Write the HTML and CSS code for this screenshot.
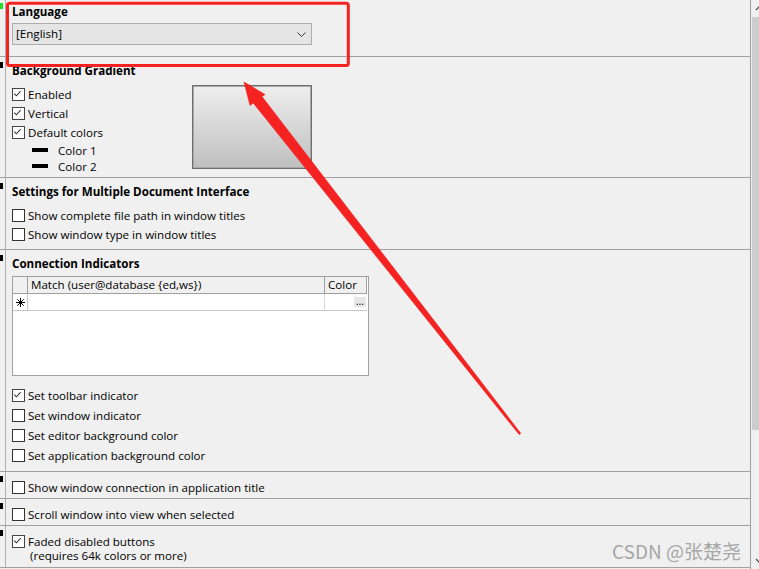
FILE: index.html
```html
<!DOCTYPE html>
<html lang="en">
<head>
<meta charset="utf-8">
<title>Preferences</title>
<link rel="stylesheet" href="styles.css">
</head>
<body>
<div class="app">
  <main class="panel">
    <section class="sec sec-lang">
      <div class="gutter"><span class="mark mark-green"></span></div>
      <div class="body">
        <div class="title">Language</div>
        <div class="select">
          <span class="select-text">[English]</span>
          <svg class="chev" width="9" height="5" viewBox="0 0 9 5"><polyline points="0.5,0.5 4.5,4.5 8.5,0.5"/></svg>
        </div>
      </div>
    </section>

    <section class="sec sec-grad">
      <div class="gutter"><span class="mark"></span></div>
      <div class="body">
        <div class="title">Background Gradient</div>
        <div class="grad-row">
          <div class="grad-opts">
            <div class="row row19"><span class="cb checked"><svg viewBox="0 0 13 13"><path d="M2.5 6.5 L5 9 L10 3.5"/></svg></span><span>Enabled</span></div>
            <div class="row row19"><span class="cb checked"><svg viewBox="0 0 13 13"><path d="M2.5 6.5 L5 9 L10 3.5"/></svg></span><span>Vertical</span></div>
            <div class="row row19"><span class="cb checked"><svg viewBox="0 0 13 13"><path d="M2.5 6.5 L5 9 L10 3.5"/></svg></span><span>Default colors</span></div>
            <div class="color-row"><span class="swatch"></span><span>Color 1</span></div>
            <div class="color-row"><span class="swatch"></span><span>Color 2</span></div>
          </div>
          <div class="preview"></div>
        </div>
      </div>
    </section>

    <section class="sec sec-mdi">
      <div class="gutter"><span class="mark"></span></div>
      <div class="body">
        <div class="title">Settings for Multiple Document Interface</div>
        <div class="list">
          <div class="row row19"><span class="cb"></span><span>Show complete file path in window titles</span></div>
          <div class="row row19"><span class="cb"></span><span>Show window type in window titles</span></div>
        </div>
      </div>
    </section>

    <section class="sec sec-conn">
      <div class="gutter"><span class="mark"></span></div>
      <div class="body">
        <div class="title">Connection Indicators</div>
        <div class="grid">
          <div class="gcell ghead gcorner"></div>
          <div class="gcell ghead gmatch">Match (user@database {ed,ws})</div>
          <div class="gcell ghead gcolor">Color</div>
          <div class="gcell grow-head">
            <svg width="9" height="9" viewBox="0 0 9 9"><path d="M4.5 0 V9 M0 4.5 H9 M1.3 1.3 L7.7 7.7 M7.7 1.3 L1.3 7.7"/></svg>
          </div>
          <div class="gcell gdata"></div>
          <div class="gcell gdata gdata-color"><span class="dots">…</span></div>
        </div>
        <div class="list list-conn">
          <div class="row row20"><span class="cb checked"><svg viewBox="0 0 13 13"><path d="M2.5 6.5 L5 9 L10 3.5"/></svg></span><span>Set toolbar indicator</span></div>
          <div class="row row20"><span class="cb"></span><span>Set window indicator</span></div>
          <div class="row row20"><span class="cb"></span><span>Set editor background color</span></div>
          <div class="row row20"><span class="cb"></span><span>Set application background color</span></div>
        </div>
      </div>
    </section>

    <section class="sec sec-one">
      <div class="gutter"><span class="mark mark-low"></span></div>
      <div class="body">
        <div class="row row20"><span class="cb"></span><span>Show window connection in application title</span></div>
      </div>
    </section>

    <section class="sec sec-one">
      <div class="gutter"><span class="mark mark-low"></span></div>
      <div class="body">
        <div class="row row20"><span class="cb"></span><span>Scroll window into view when selected</span></div>
      </div>
    </section>

    <section class="sec sec-faded">
      <div class="gutter"><span class="mark mark-low"></span></div>
      <div class="body">
        <div class="row row15"><span class="cb checked"><svg viewBox="0 0 13 13"><path d="M2.5 6.5 L5 9 L10 3.5"/></svg></span><span>Faded disabled buttons</span></div>
        <div class="note">(requires 64k colors or more)</div>
      </div>
    </section>
  </main>

  <aside class="scrollbar">
    <div class="sb-btn">
      <svg width="8" height="17" viewBox="0 0 8 17"><polyline points="5,10 9,6 13,10"/></svg>
    </div>
    <div class="sb-thumb"></div>
    <div class="sb-track"></div>
    <div class="sb-btn sb-btn-down">
      <svg width="8" height="17" viewBox="0 0 8 17"><polyline points="5,7 9,11 13,7"/></svg>
    </div>
  </aside>

  <svg class="annot" width="759" height="569" viewBox="0 0 759 569">
    <rect x="7.5" y="3.2" width="340.8" height="62.3" rx="2" ry="2"/>
    <polygon points="244,82 265,94.4 262,96.6 520.8,433.4 519.2,434.6 253.2,103 250,105.5"/>
  </svg>
  <div class="watermark">CSDN @张楚尧</div>
</div>
</body>
</html>
```

FILE: styles.css
```css
* { box-sizing: border-box; }

html, body {
  margin: 0;
  padding: 0;
  background: #f0f0f0;
}

body {
  font-family: "Open Sans", "Noto Sans", "Liberation Sans", sans-serif;
  font-size: 11.6px;
  color: #000;
}

.app {
  position: relative;
  width: 759px;
  height: 569px;
  overflow: hidden;
  display: flex;
  background: #f0f0f0;
}

.panel {
  width: 751px;
  flex: none;
  border-right: 1px solid #a0a0a0;
  display: flex;
  flex-direction: column;
}

.sec {
  display: flex;
  flex: none;
  border-bottom: 1px solid #a0a0a0;
}

.sec-lang { height: 57px; }
.sec-grad { height: 121px; }
.sec-mdi { height: 72px; }
.sec-conn { height: 222px; }
.sec-one { height: 27px; }
.sec-faded { height: 42px; }

.gutter {
  width: 5px;
  flex: none;
}

.mark {
  display: block;
  width: 3px;
  height: 6px;
  margin-top: 5px;
  background: #000;
}

.mark-green {
  background: #22dd22;
  margin-top: 3px;
}

.mark-low { margin-top: 4px; }

.body {
  flex: 1;
  border-left: 1px solid #b0b0b0;
  padding-left: 6px;
}

.title {
  font-weight: 700;
  height: 16px;
  line-height: 16px;
  margin-top: 6px;
  white-space: nowrap;
}

.sec-lang .title { margin-top: 4px; }
.sec-grad .title { margin-top: 6px; }

/* dropdown */
.select {
  margin-top: 3px;
  width: 300px;
  height: 22px;
  background: #e5e5e5;
  border: 1px solid #adadad;
  display: flex;
  align-items: center;
  justify-content: space-between;
  padding: 0 5px 0 3px;
}

.select-text { line-height: 16px; }

.chev {
  fill: none;
  stroke: #333;
  stroke-width: 1;
}

/* rows & checkboxes */
.row {
  display: flex;
  align-items: center;
  gap: 3px;
  white-space: nowrap;
}

.row19 { height: 19px; }
.row20 { height: 20px; }
.row15 { height: 15px; }

.cb {
  width: 13px;
  height: 13px;
  flex: none;
  border: 1px solid #333;
  background: #fff;
  display: flex;
}

.cb.checked { border-color: #444; }

.cb svg {
  width: 11px;
  height: 11px;
  margin: 0;
  overflow: visible;
}

.cb svg path {
  fill: none;
  stroke: #333;
  stroke-width: 1.2;
  transform: translate(-1px, -1px);
}

/* background gradient */
.grad-row {
  display: flex;
  margin-top: 6px;
}

.grad-opts {
  width: 180px;
  flex: none;
}

.color-row {
  height: 16px;
  display: flex;
  align-items: center;
  padding-left: 20px;
  gap: 10px;
}

.swatch {
  width: 16px;
  height: 4px;
  background: #000;
}

.preview {
  width: 120px;
  height: 84px;
  border: 1px solid #6e6e6e;
  box-shadow: inset 0 0 0 1px #a8a8a8;
  background: linear-gradient(to bottom, #eeeeee, #bfbfbf);
}

.list { margin-top: 6px; }

/* grid */
.grid {
  margin-top: 4px;
  width: 357px;
  height: 100px;
  border: 1px solid #a0a0a0;
  background: #fff;
  display: grid;
  grid-template-columns: 15px 297px 42px;
  grid-template-rows: 17px 17px;
  align-content: start;
}

.gcell {
  border-right: 1px solid #a0a0a0;
  border-bottom: 1px solid #a0a0a0;
  line-height: 16px;
  white-space: nowrap;
}

.ghead { background: #f0f0f0; }
.gmatch { padding-left: 3px; }
.gcolor { padding-left: 3px; }

.grow-head {
  display: flex;
  align-items: center;
  justify-content: center;
  border-bottom-color: #c8c8c8;
  border-right-color: #c8c8c8;
}

.grow-head svg path {
  stroke: #000;
  stroke-width: 1;
  fill: none;
}

.gdata {
  border-right-color: #d8d8d8;
  border-bottom-color: #c8c8c8;
}

.gdata-color {
  border-right: none;
  display: flex;
  justify-content: flex-end;
  align-items: center;
  padding-right: 1px;
}

.dots {
  width: 12px;
  height: 10px;
  background: #e6e6e6;
  display: flex;
  justify-content: center;
  align-items: flex-start;
  font-size: 10px;
  line-height: 8px;
  color: #000;
}

.list-conn { margin-top: 9px; }

.sec-one .row { margin-top: 5px; }

.sec-faded .row { margin-top: 8px; }

.note {
  padding-left: 18px;
  height: 15px;
  line-height: 14px;
  white-space: nowrap;
}

/* scrollbar */
.scrollbar {
  width: 8px;
  flex: none;
  display: flex;
  flex-direction: column;
  background: #f0f0f0;
  overflow: hidden;
}

.sb-btn {
  height: 17px;
  flex: none;
}

.sb-btn svg {
  display: block;
  overflow: hidden;
}

.sb-btn polyline {
  fill: none;
  stroke: #606060;
  stroke-width: 1.5;
}

.sb-thumb {
  height: 413px;
  margin-left: 1px;
  background: #cdcdcd;
  flex: none;
}

.sb-track { flex: 1; }

/* annotations */
.annot {
  position: absolute;
  left: 0;
  top: 0;
  pointer-events: none;
}

.annot rect {
  fill: none;
  stroke: #f52222;
  stroke-width: 3;
}

.annot polygon {
  fill: #f52222;
  stroke: #f52222;
  stroke-width: 0.6;
  stroke-linejoin: round;
}

.watermark {
  position: absolute;
  left: 612px;
  top: 538px;
  font-family: "Noto Sans CJK SC", "Noto Sans", sans-serif;
  font-size: 19px;
  line-height: 26px;
  color: #a6a6a6;
  white-space: nowrap;
}
```
